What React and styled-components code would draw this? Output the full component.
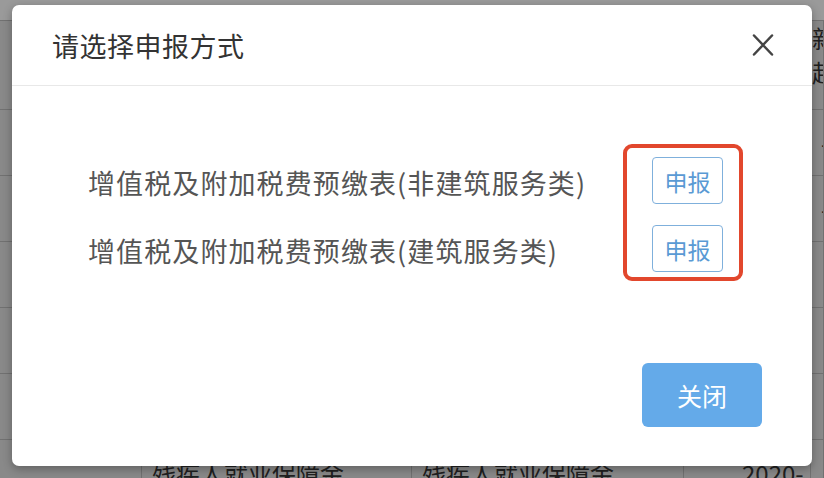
import React from 'react'
import styled, { createGlobalStyle } from 'styled-components'

const GlobalStyle = createGlobalStyle`
  html, body {
    margin: 0;
    padding: 0;
    background: #ffffff;
  }
  body {
    font-family: "Noto Sans CJK SC", "Noto Sans", sans-serif;
  }
`

const Page = styled.div`
  position: relative;
  width: 824px;
  height: 478px;
  overflow: hidden;
  background: #ffffff;
`

const TopStrip = styled.div`
  height: 20px;
  background: #f4f4f4;
  border-bottom: 1px solid #b4b4b4;
`

const Table = styled.div`
  display: grid;
  grid-template-columns: 142px 270px 272px 127px 1fr;
  grid-template-rows: 89px;
  grid-auto-rows: 66px;
  background: #dadada;
`

const HeadCell = styled.div`
  border-bottom: 1px solid #b4b4b4;
  border-right: 1px solid #b4b4b4;
  display: flex;
  flex-direction: column;
  padding: 0 0 0 ${p => p.$pad || 0}px;
  font-size: 24px;
  line-height: 34px;
  color: #333333;
  white-space: nowrap;
  overflow: hidden;
`

const Cell = styled.div`
  border-bottom: 1px solid #b4b4b4;
  border-right: 1px solid #b4b4b4;
  display: flex;
  align-items: center;
  padding-left: ${p => p.$pad || 10}px;
  font-size: 24px;
  color: #333333;
  white-space: nowrap;
  overflow: hidden;
`

const Mask = styled.div`
  position: absolute;
  inset: 0;
  background: rgba(0, 0, 0, 0.37);
`

const Dialog = styled.div`
  position: absolute;
  left: 12px;
  top: 5px;
  width: 800px;
  height: 461px;
  background: #ffffff;
  border-radius: 7px;
  box-shadow: 0 3px 10px rgba(0, 0, 0, 0.3);
  display: flex;
  flex-direction: column;
`

const Header = styled.div`
  height: 80px;
  border-bottom: 1px solid #e8e8e8;
  display: flex;
  align-items: center;
  justify-content: space-between;
  padding: 0 36px 0 40px;
`

const Title = styled.div`
  font-size: 27px;
  color: #333333;
  letter-spacing: 0.5px;
`

const CloseIcon = styled.button`
  width: 27px;
  height: 22px;
  padding: 0;
  border: none;
  background: none;
  cursor: pointer;
  display: flex;
  align-items: center;
  justify-content: center;
`

const Body = styled.div`
  display: grid;
  grid-template-columns: 1fr auto;
  align-items: start;
  padding: 58px 69px 0 76px;
`

const Labels = styled.div`
  display: flex;
  flex-direction: column;
  gap: 21px;
  padding-top: 15px;
`

const Label = styled.div`
  height: 47px;
  display: flex;
  align-items: center;
  font-size: 27px;
  color: #555555;
  letter-spacing: 1.1px;
`

const Highlight = styled.div`
  border: 4px solid #e2472d;
  border-radius: 9px;
  padding: 9px 16px 5px 25px;
  display: flex;
  flex-direction: column;
  gap: 21px;
`

const ReportButton = styled.button`
  width: 71px;
  height: 47px;
  border: 1.5px solid #7fb0dc;
  border-radius: 4px;
  background: #ffffff;
  color: #5a9ad4;
  font-family: inherit;
  font-size: 23px;
  cursor: pointer;
  padding: 0;
`

const Footer = styled.div`
  margin-top: auto;
  display: flex;
  justify-content: flex-end;
  padding: 0 50px 39px 0;
`

const PrimaryButton = styled.button`
  width: 120px;
  height: 64px;
  border: none;
  border-radius: 6px;
  background: #64aae9;
  color: #ffffff;
  font-family: inherit;
  font-size: 25px;
  cursor: pointer;
`

const rows = [
  ['', '', '', '', '-0'],
  ['', '', '', '', '-0'],
  ['', '', '', '', ''],
  ['', '', '', '', ''],
  ['', '', '', '', ''],
  ['', '残疾人就业保障金', '残疾人就业保障金', '2020-', ''],
]

const options = ['增值税及附加税费预缴表(非建筑服务类)', '增值税及附加税费预缴表(建筑服务类)']

const App = () => {
  return (
    <>
      <GlobalStyle />
      <Page>
        <TopStrip />
        <Table>
          <HeadCell />
          <HeadCell />
          <HeadCell />
          <HeadCell />
          <HeadCell $pad={1}>
            <span>新</span>
            <span>起</span>
          </HeadCell>
          {rows.map((r, i) => (
            <React.Fragment key={i}>
              <Cell />
              <Cell>{r[1]}</Cell>
              <Cell>{r[2]}</Cell>
              <Cell $pad={58}>{r[3]}</Cell>
              <Cell $pad={0}>{r[4]}</Cell>
            </React.Fragment>
          ))}
        </Table>
        <Mask />
        <Dialog>
          <Header>
            <Title>请选择申报方式</Title>
            <CloseIcon aria-label="close">
              <svg width="24" height="22" viewBox="0 0 24 22">
                <path d="M3 1.5 L21 20.5 M21 1.5 L3 20.5" stroke="#444" strokeWidth="2.5" strokeLinecap="round" />
              </svg>
            </CloseIcon>
          </Header>
          <Body>
            <Labels>
              {options.map(o => (
                <Label key={o}>{o}</Label>
              ))}
            </Labels>
            <Highlight>
              {options.map(o => (
                <ReportButton key={o}>申报</ReportButton>
              ))}
            </Highlight>
          </Body>
          <Footer>
            <PrimaryButton>关闭</PrimaryButton>
          </Footer>
        </Dialog>
      </Page>
    </>
  )
}

export default App
